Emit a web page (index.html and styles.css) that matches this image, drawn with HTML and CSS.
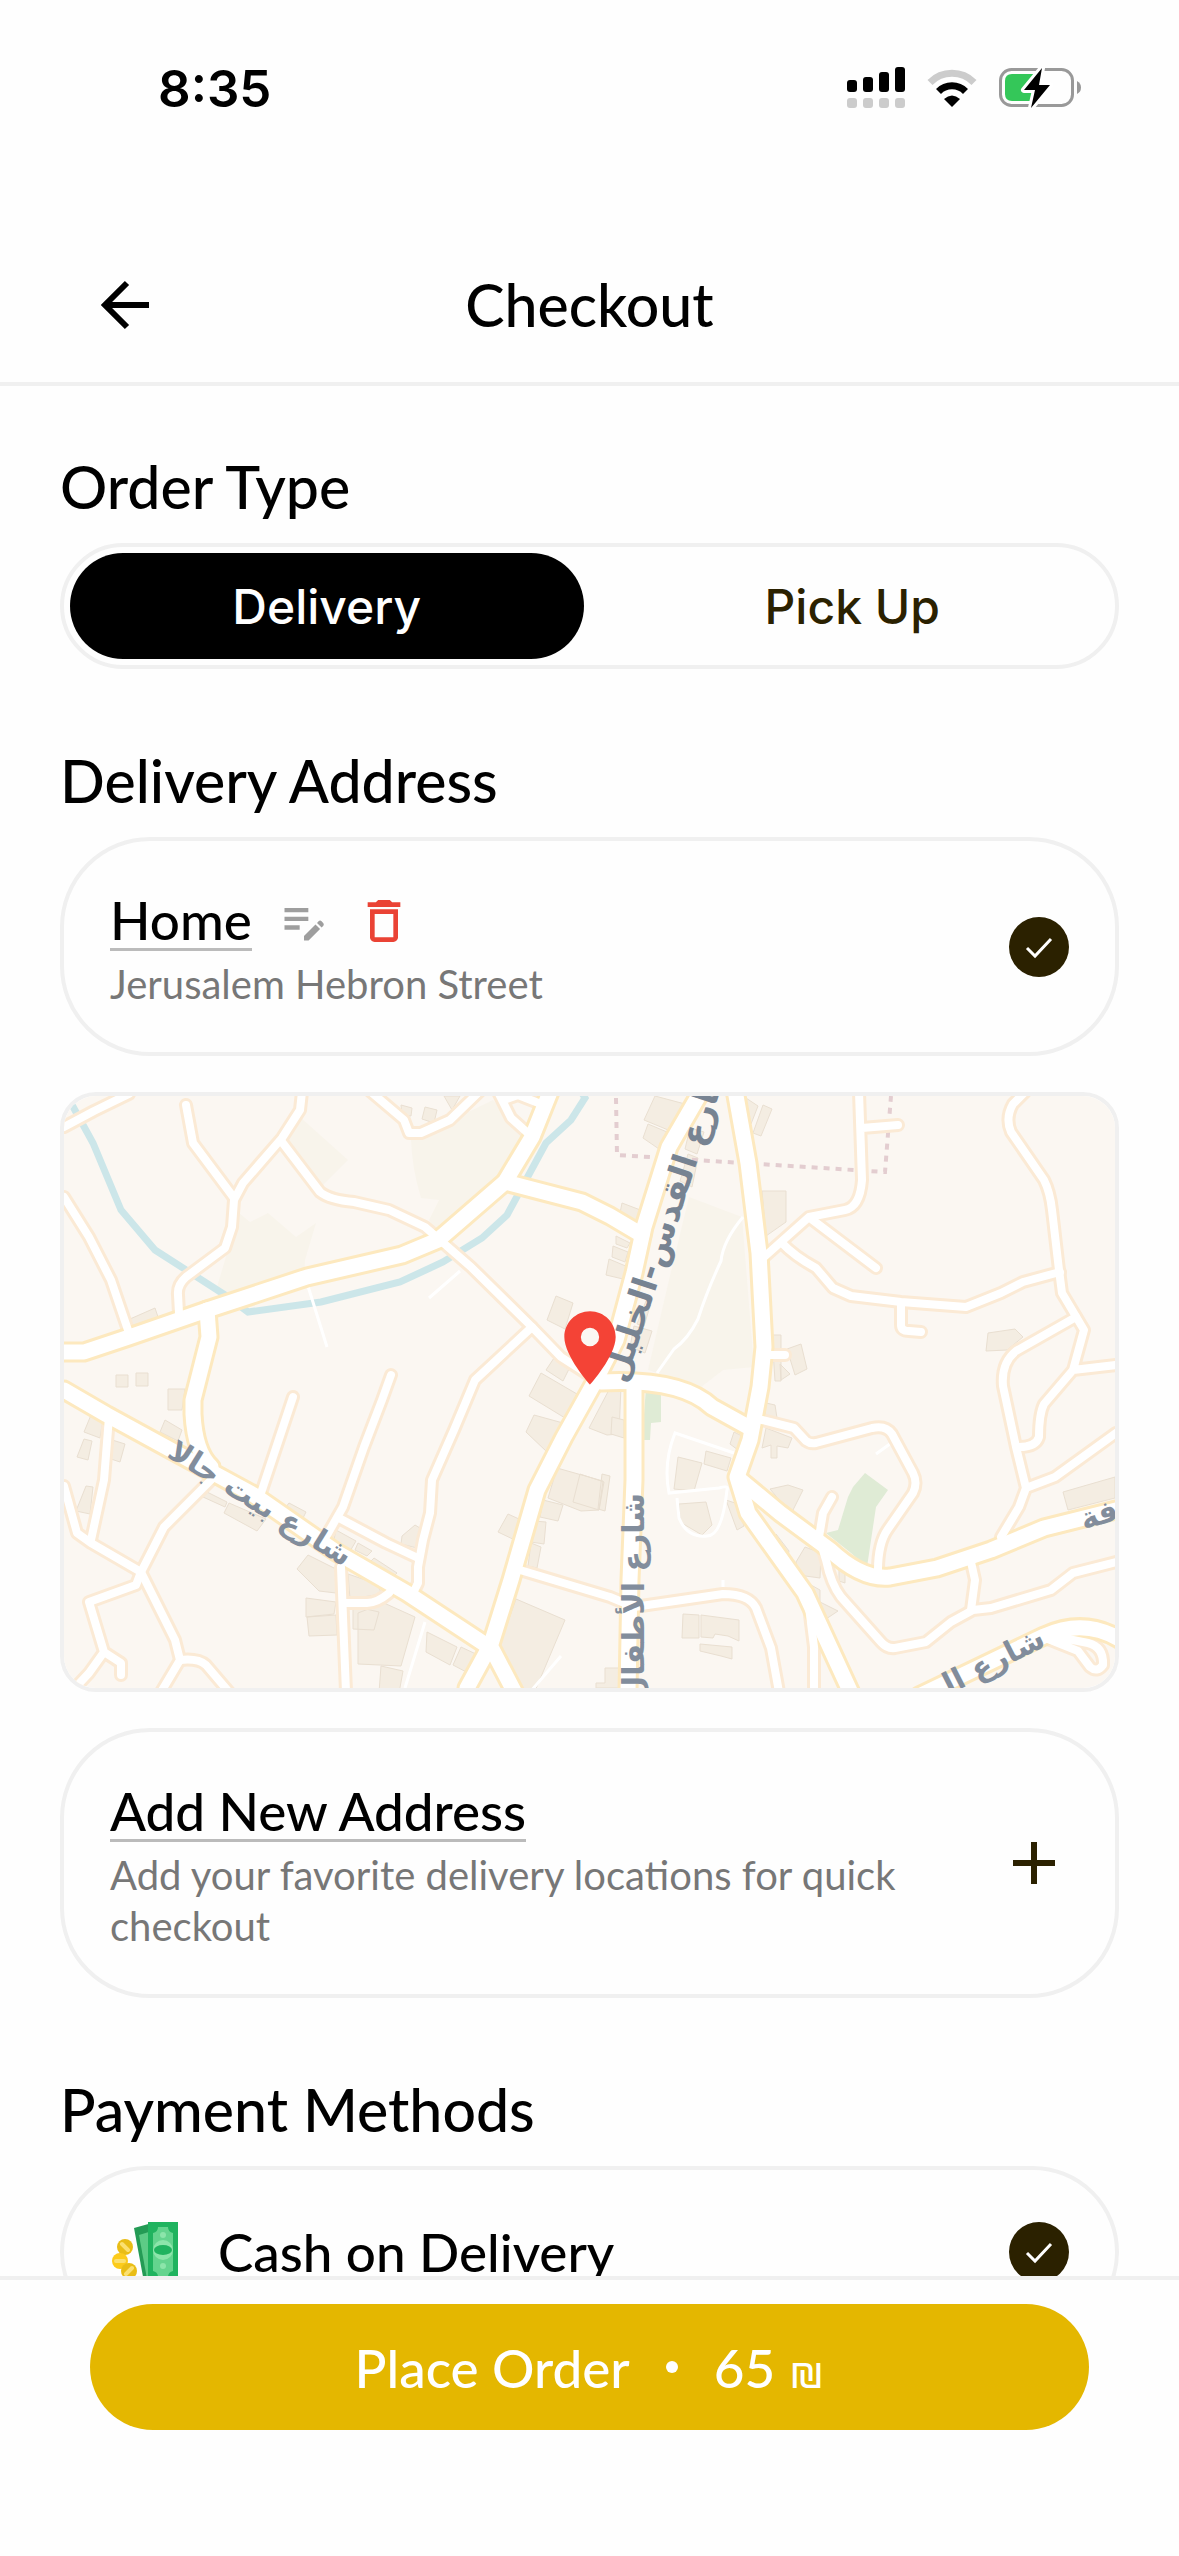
FILE: index.html
```
<!DOCTYPE html>
<html lang="en">
<head>
    <meta charset="UTF-8">
    <meta name="viewport" content="width=device-width, initial-scale=1.0">
    <title>Checkout</title>
    <link rel="stylesheet" href="styles.css">
</head>
<body>
    <div class="status-bar">
        <span class="time">8:35</span>
        <div class="status-icons">
            <svg width="58" height="42" viewBox="0 0 58 42">
                <g fill="#000">
                    <rect x="0" y="13" width="10" height="12" rx="3"/>
                    <rect x="16" y="10" width="10" height="15" rx="3"/>
                    <rect x="32" y="5" width="10" height="20" rx="3"/>
                    <rect x="48" y="0" width="10" height="25" rx="3"/>
                </g>
                <g fill="#ccc">
                    <rect x="0" y="31" width="10" height="10" rx="3"/>
                    <rect x="16" y="31" width="10" height="10" rx="3"/>
                    <rect x="32" y="31" width="10" height="10" rx="3"/>
                    <rect x="48" y="31" width="10" height="10" rx="3"/>
                </g>
            </svg>
            <svg width="50" height="38" viewBox="0 0 50 38">
                <path d="M3 13.500a31 31 0 0 1 44 0" fill="none" stroke="#ccc" stroke-width="7"/>
                <path d="M11.500 22.500a19 19 0 0 1 27 0" fill="none" stroke="#000" stroke-width="7"/>
                <path d="M25 38l-8-8q8-7 16 0z" fill="#000"/>
            </svg>
            <svg width="82" height="42" viewBox="0 0 82 42">
                <rect x="1.500" y="2.500" width="72" height="36" rx="11" fill="none" stroke="#999" stroke-width="3"/>
                <path d="M78 14v13q4-2 4-6.500t-4-6.500z" fill="#999"/>
                <path d="M13 7h28v27H13q-7 0-7-7V14q0-7 7-7z" fill="#34c759"/>
                <path d="M43 1L25 23h11l-4 18 19-23H40z" fill="#000" stroke="#fff" stroke-width="6" stroke-linejoin="round" paint-order="stroke"/>
            </svg>
        </div>
    </div>

    <header class="top-bar">
        <button class="icon-btn back-btn" aria-label="Back">
            <svg width="50" height="50" viewBox="0 0 50 50" fill="none" stroke="#000" stroke-width="6">
                <path d="M49 25H5M27 3L5 25l22 22"/>
            </svg>
        </button>
        <h1>Checkout</h1>
    </header>

    <main class="content">
        <section>
            <h2>Order Type</h2>
            <div class="order-type">
                <button class="type-btn active">Delivery</button>
                <button class="type-btn">Pick Up</button>
            </div>
        </section>

        <section>
            <h2>Delivery Address</h2>
            <div class="card">
                <div class="card-text">
                    <div class="card-title">
                        <a href="#" class="address-link">Home</a>
                        <button class="icon-btn" aria-label="Edit address">
                            <svg width="52" height="52" viewBox="0 0 24 24" fill="#9e9e9e">
                                <path d="M3 10h11v2H3v-2zm0-2h11V6H3v2zm0 8h7v-2H3v2zm15.010-3.130l.710-.710a.996.996 0 0 1 1.410 0l.710.710c.390.390.390 1.020 0 1.410l-.710.710-2.120-2.120zm-.710.710l-5.300 5.300V21h2.120l5.300-5.300-2.120-2.120z"/>
                            </svg>
                        </button>
                        <button class="icon-btn" aria-label="Delete address">
                            <svg width="56" height="56" viewBox="0 0 24 24" fill="#ea4335">
                                <path d="M6 19c0 1.100.900 2 2 2h8c1.100 0 2-.900 2-2V7H6v12zM8 9h8v10H8V9zm7.500-5l-1-1h-5l-1 1H5v2h14V4z"/>
                            </svg>
                        </button>
                    </div>
                    <p>Jerusalem Hebron Street</p>
                </div>
                <svg class="check" viewBox="0 0 60 60">
                    <circle cx="30" cy="30" r="30" fill="#2b2100"/>
                    <path d="M18 31l8 8 16-17" fill="none" stroke="#fff" stroke-width="3"/>
                </svg>
            </div>

            <div class="map">
                <svg class="map-art" viewBox="0 0 1051 592" preserveAspectRatio="xMidYMid slice">
                    <defs>
                        <g id="small-roads">
                            <path d="M0 31L30 15 65-2"/>
                            <path d="M122 9l7 38 41 55"/>
                            <path d="M238-4l-2 18-18 28-39 45-9 17-2 27-7 21-39 29q-9 8-8 18l1 18"/>
                            <path d="M218 46l38 50q10 8 34 10l35 8 36 17 46 40 61 60 29 30 25 16"/>
                            <path d="M307-4l33 28 5 13h12l29-13 29-28"/>
                            <path d="M434-4l13 26 19 17M440 4l14-5 23 9"/>
                            <path d="M0 101l25 40 22 43 18 53"/>
                            <path d="M327 279l-9 25-18 47-21 60-16 28"/>
                            <path d="M229 301l-32 96"/>
                            <path d="M468 231l-57 53-21 50-22 50-2 33-7 27-5 27v16l-7 14"/>
                            <path d="M275 422l47 25 32 15"/>
                            <path d="M45 321l-5 63-13 60"/>
                            <path d="M0 390l13 47 14 10 50 29 34 68 5 20-19 32"/>
                            <path d="M147 384l-47 47-23 45-5 13-47 17 15 50-15 21-14 15M40 556l17 11v12M116 564q18-2 26 5l23 27"/>
                            <path d="M277 471l5 125M281 507h22q10 0 22-10"/>
                            <path d="M456 474l90 27 24 10 89-13q26 0 33 14l15 40 8 44"/>
                            <path d="M698 324l32 8 12 13q4 3 10 2l56-15q14-3 20 6l21 39q5 10 0 20l-25 36q-10 14-10 41"/>
                            <path d="M768 401l-9 16-4 24 7 23q5 24 15 37l40 45q6 7 14 6l31-6 25-20 22-12 18-2 60-18 22-17 43-11"/>
                            <path d="M907 466l4 18-4 30M745 511l5 40v45"/>
                            <path d="M961-4l-12 12q-8 14-2 28l33 48q6 12 8 30l7 60 3 23 22 37-11 40-29 34q-5 10-5 33-3 10-20 10M1009 274l43-5"/>
                            <path d="M1012 221l-60 34q-15 12-13 35l13 61 10 41-7 19-18 30M962 392l29-11 61-44"/>
                            <path d="M996 176l-37 10-22 11-35 14-65-5-50-6-18-8-17-20q-22-12-34-25"/>
                            <path d="M700 161l45-40 36-7q15-3 17-30l-3-88M798 32l36-3M746 122l66 50M837 209v20q0 6 8 6l12 1M704 259h17"/>
                            <path d="M984 539l40 8q16 4 15 22-6 8-13 2l-12-16-30-12"/>
                        </g>
                        <g id="main-roads">
                            <path d="M0 256h20l45-15 78-27 100-33 95-22 36-15 67-58 27-45 20-50"/>
                            <path d="M441 86l77 20 28 14 32 19"/>
                            <path d="M638-6l-33 57-25 80-10 46-18 67-23 45-29 52-27 53-26 90-20 64-24 44M427 551l24 46"/>
                            <path d="M671-6l13 73 11 90 5 94-4 40-10 53-13 37 11 36 57 80 46 100"/>
                            <path d="M537 286q80-4 111 25l38 21"/>
                            <path d="M570 289v95l-4 100-2 112"/>
                            <path d="M675 383l41 34 50 37q32 30 60 27l47-9 54-18 53-22 72-18"/>
                            <path d="M0 294l43 25 64 35 83 45 82 57 71 41 82 54"/>
                            <path d="M143 214l2 27-16 63v14q2 38 18 53"/>
                            <path d="M855 600l125-60q40-18 75 3"/>
                        </g>
                    </defs>

                    <rect width="1051" height="592" fill="#fbf7f2"/>

                    <!-- open land -->
                    <g fill="#f8f4eb">
                        <path d="M625 101l53 20 12 150-31 3-22 17-53-17 21-90z"/>
                        <path d="M347 44l82-40 36 40-22 33-69 60-9-13 10-20-18-2q-9-30-10-58z"/>
                        <path d="M236 21l48 43-27 27-39-49z"/>
                        <path d="M175 117l11 9 18-9 28 24 20-14-11 37-1 17-72 20-15-10 8-27z"/>
                    </g>

                    <!-- parks -->
                    <g fill="#dfebd5">
                        <path d="M582 292h15v34l-10 1-1 17h-8z"/>
                        <path d="M801 377l23 17-12 17-9 60-16-14-25-20 12-3 10-33 5-10z"/>
                    </g>

                    <!-- buildings -->
                    <g fill="#f4ede2" stroke="#e9dfd1" stroke-width="1">
                        <path d="M337 9l11 3-1 8-9-1zM361 11l12 3-3 13-12-4zM380 0h16l-8 14z"/>
                        <path d="M591 0l30 8-12 28-29-12zM584 28l19 8-8 17-16-11zM626 32l14 4-7 22-12-5zM624 58l10 4-6 29-12-6zM558 107l21 8-7 13-17-6zM552 140l14 7-3 5-11-4zM549 150l15 6-3 10-13-5zM545 163l19 8-5 12-17-4zM582 205l4 5-6 20-7-2zM570 230l18 5-7 22-15-6z"/>
                        <path d="M682 2l12 8-7 18-8-10zM699 9l9 4-11 27-8-3zM698 95h24v31l-20 14z"/>
                        <path d="M708 239h9v46h-6zM723 253l14-5 6 25-12 6zM716 268l10 10-9 6zM924 237l27-4 8 8-16 13-21 1z"/>
                        <path d="M492 200l17 7-8 26-18-9zM490 262l16 9-7 14-17-11zM477 277l36 21-12 24-36-22zM66 223l25-11 3 9-29 10zM52 279h12v12H52zM72 277h12v13H72zM104 293h17l-3 21h-14z"/>
                        <path d="M470 319l29 8-16 29-21-20zM547 290l-22 42 18 7 12-1 2-48zM493 372l46 13-4 29-18 1-33-13zM538 378l8 2-5 35-7-2zM516 378l24 8-5 28-26-8zM479 404l20 5-5 16-18-4zM444 418l22 10-11 18-21-10zM470 425l12 1-2 22-13-2zM467 447l10 4-4 21-9-2z"/>
                        <path d="M452 503l49 21-30 71h-27l-10-41zM363 536l30 15-7 18-24-13zM397 551l17 8-6 20-19-10zM320 507l31 14-14 49-43-2v-51zM317 570l22 5-4 22h-20zM289 510l26 6-5 18-21-1zM242 502l30 4-2 12-28 3zM243 521l29-2 1 20-28 1zM244 459l28 14v24l-17-2-22-22zM284 478l29 10 5 10-32 5zM272 434l20 11-7 12-16-9zM338 440l13-11 5 3-3 20-16-4zM294 447l14 8-5 5-12-6zM310 462l23 15-5 5-25-13zM225 407l17 9-3 6-18-10zM165 407l37 16-9 12-33-18zM141 395l22 11-2 5-22-10zM101 324l17 10-4 11-18-9zM27 319l12 5-3 18-16-6zM20 343l8 2-4 19-11-3zM45 343l16 5-5 18-12-4zM22 390l7 1-3 27-14-3z"/>
                        <path d="M548 321l12 3v18l-13-4zM702 307l9 2 2 13-12-3zM670 336l8 4-4 14-8-6zM702 332l26 10-4 10-11-2v12h-6v-13l-9 3zM614 361l24 6-8 28-20-2zM642 355l25 7-4 13-23-7zM615 408l27-2 6 23-10 10-22-13zM662 404l12 4 6 22-7 4zM706 393l18-4 15 5-12 24zM712 438l13 17-2 9-13-16zM741 451l16 6-1 25-22-3-2-13zM747 489l9 5v12l18 9-15 10-16-23zM775 474l6 3v10l-6-2z"/>
                        <path d="M619 518l16 1v23h-17zM637 519l38 5v21l-11-5-13-2-2 4-12-1zM636 548l32 3v12l-11-3-21-5zM541 572h14v20h-23v-5h9zM999 396l52-15v21l-47 12z"/>
                    </g>

                    <path class="river" d="M7 7l22 40 28 67 34 40 70 45 23 17 73-10 79-20 43-20 39-24 25-23 39-72 25-23 14-22-5-8"/>
                    <path class="border-line" d="M552 2l1 57 268 17 6-76"/>

                    <g class="footpath">
                        <path d="M243 187l20 64M396 175l-31 27M679 121q-20 24-22 44-14 30-23 58-10 20-24 30l-17 24"/>
                        <path d="M670 357l-59-20q-12 30-6 60l50-5q10-3 8 2-5 46-20 46-20 2-28-18l-2-20M361 526l-20 66M497 560l-30 35M830 345l-18 13M659 484v14"/>
                    </g>

                    <use href="#small-roads" class="small-casing"/>
                    <use href="#main-roads" class="main-casing"/>
                    <use href="#small-roads" class="small-fill"/>
                    <use href="#main-roads" class="main-fill"/>

                    <g class="street-name">
                        <text class="major" transform="translate(561 288) rotate(-72)">شارع القدس-الخليل</text>
                        <text transform="translate(102 360) rotate(32)">شارع بيت جالا</text>
                        <text transform="translate(580 397) rotate(-90)" text-anchor="end">شارع الأطفال</text>
                        <text transform="translate(983 549) rotate(-27)" text-anchor="end">شارع ال</text>
                        <text transform="translate(1020 434) rotate(-18)">فة</text>
                    </g>
                </svg>
                <svg class="map-pin" viewBox="0 0 24 24" fill="#f44336">
                    <path d="M12 2C8.130 2 5 5.130 5 9c0 5.250 7 13 7 13s7-7.750 7-13c0-3.870-3.130-7-7-7zm0 9.500a2.500 2.500 0 0 1 0-5 2.500 2.500 0 0 1 0 5z"/>
                </svg>
            </div>

            <div class="card">
                <div class="card-text">
                    <div class="card-title">
                        <a href="#" class="address-link">Add New Address</a>
                    </div>
                    <p>Add your favorite delivery locations for quick checkout</p>
                </div>
                <button class="icon-btn add-btn" aria-label="Add address">
                    <svg width="42" height="42" viewBox="0 0 42 42" stroke="#2b2100" stroke-width="6">
                        <path d="M0 21h42M21 0v42"/>
                    </svg>
                </button>
            </div>
        </section>

        <section>
            <h2>Payment Methods</h2>
            <div class="card payment-card">
                <svg class="cash" width="66" height="60" viewBox="0 0 66 60">
                    <path d="M22 6l18-5v57l-8 2z" fill="#249b55"/>
                    <path d="M27 13l13-4v46l-5 2z" fill="#5dcb86"/>
                    <rect x="36" y="0" width="30" height="60" fill="#20b35f"/>
                    <path d="M46 5h10q0 5 5 6v38q-5 1-5 6H46q0-5-5-6V11q5-1 5-6z" fill="#64d48e"/>
                    <circle cx="51" cy="28" r="10" fill="#8ce5aa"/>
                    <ellipse cx="51" cy="28" rx="9" ry="5" fill="#20b35f"/>
                    <circle cx="51" cy="13" r="3" fill="#8ce5aa"/>
                    <circle cx="51" cy="44" r="3" fill="#8ce5aa"/>
                    <circle cx="13" cy="25" r="8" fill="#e9bd16"/>
                    <circle cx="8" cy="39" r="8" fill="#fccb1b"/>
                    <circle cx="17" cy="49" r="8" fill="#e9bd16"/>
                    <g stroke="#fbe070" stroke-width="4" stroke-linecap="round">
                        <path d="M10 22l6 6M4 39h8M14 52l6-6"/>
                    </g>
                </svg>
                <span class="method">Cash on Delivery</span>
                <svg class="check" viewBox="0 0 60 60">
                    <circle cx="30" cy="30" r="30" fill="#2b2100"/>
                    <path d="M18 31l8 8 16-17" fill="none" stroke="#fff" stroke-width="3"/>
                </svg>
            </div>
        </section>
    </main>

    <footer class="bottom-bar">
        <button class="place-order">
            <span>Place Order</span>
            <span class="dot"></span>
            <span>65 <small>₪</small></span>
        </button>
    </footer>
</body>
</html>
```
FILE: styles.css
```
* {
    margin: 0;
    padding: 0;
    box-sizing: border-box;
}

body {
    height: 100vh;
    display: flex;
    flex-direction: column;
    background: #fefefe;
    color: #000;
    font-family: Lato, "Liberation Sans", sans-serif;
    font-weight: 500;
}

svg {
    display: block;
}

button {
    font: inherit;
    border: none;
    background: none;
    cursor: pointer;
}

/* status bar */
.status-bar {
    display: flex;
    align-items: center;
    justify-content: space-between;
    height: 176px;
    padding: 0 98px 0 158px;
    flex-shrink: 0;
}

.time {
    font-family: Inter, sans-serif;
    font-size: 51px;
    font-weight: 600;
}

.status-icons {
    display: flex;
    align-items: center;
    gap: 22px;
}

/* header */
.top-bar {
    position: relative;
    display: flex;
    align-items: center;
    justify-content: center;
    height: 210px;
    padding-top: 52px;
    border-bottom: 4px solid #f0f0f0;
    flex-shrink: 0;
}

.back-btn {
    position: absolute;
    left: 100px;
}

h1,
h2 {
    font-size: 59px;
    font-weight: 500;
    line-height: 72px;
}

/* content */
.content {
    flex: 1;
    min-height: 0;
    overflow: hidden;
    padding: 65px 60px 0;
}

section {
    margin-bottom: 76px;
}

h2 {
    margin-bottom: 20px;
}

.order-type {
    display: flex;
    gap: 12px;
    padding: 6px;
    height: 126px;
    border: 4px solid #f0f0f0;
    border-radius: 63px;
}

.type-btn {
    flex: 1;
    border-radius: 53px;
    color: #2b2100;
    font-family: Inter, sans-serif;
    font-size: 48px;
    font-weight: 500;
}

.type-btn.active {
    background: #000;
    color: #fff;
}

.card {
    display: flex;
    align-items: center;
    padding: 46px;
    border: 4px solid #f0f0f0;
    border-radius: 90px;
}

.card-text {
    flex: 1;
}

.card-title {
    display: flex;
    align-items: center;
    gap: 26px;
    height: 68px;
}

.address-link {
    color: #000;
    font-size: 53px;
    line-height: 56px;
    text-decoration: none;
    border-bottom: 3px solid #bbb;
}

.card-text p {
    padding-top: 4px;
    margin-bottom: -4px;
    color: #777;
    font-size: 40px;
    font-weight: 400;
    line-height: 51px;
}

.check {
    width: 60px;
    height: 60px;
}

.add-btn {
    margin: 0 14px 0 60px;
}

/* map */
.map {
    position: relative;
    height: 600px;
    margin: 36px 0;
    border: 4px solid #f0f0f0;
    border-radius: 36px;
    overflow: hidden;
}

.map-art {
    width: 100%;
    height: 100%;
    fill: none;
}

.map-pin {
    position: absolute;
    top: 208px;
    left: calc(50% - 44px);
    width: 88px;
    height: 88px;
}

.river {
    stroke: #cce6e9;
    stroke-width: 7;
}

.border-line {
    stroke: #e3cdd0;
    stroke-width: 4;
    stroke-dasharray: 6 6;
}

.footpath {
    stroke: #fff;
    stroke-width: 3;
}

.small-casing,
.small-fill,
.main-casing,
.main-fill {
    stroke-linecap: round;
    stroke-linejoin: round;
}

.small-casing {
    stroke: #fbead5;
    stroke-width: 14;
}

.small-fill {
    stroke: #fff;
    stroke-width: 8;
}

.main-casing {
    stroke: #fde9bf;
    stroke-width: 21;
}

.main-fill {
    stroke: #fff;
    stroke-width: 15;
}

.street-name text {
    fill: #828d9c;
    font-family: "DejaVu Sans", sans-serif;
    font-size: 30px;
    font-weight: 700;
}

.street-name .major {
    fill: #778392;
    font-size: 34px;
}

/* payment */
.payment-card {
    padding: 52px 46px;
}

.cash {
    margin: 0 40px 0 2px;
}

.method {
    flex: 1;
    font-size: 53px;
    line-height: 60px;
}

/* bottom bar */
.bottom-bar {
    height: 280px;
    padding: 24px 90px 0;
    background: #fefefe;
    border-top: 4px solid #f0f0f0;
    flex-shrink: 0;
}

.place-order {
    display: flex;
    align-items: center;
    justify-content: center;
    gap: 36px;
    width: 100%;
    height: 126px;
    border-radius: 63px;
    background: #e4b700;
    color: #fff;
    font-size: 53px;
}

.place-order small {
    font-size: 42px;
}

.dot {
    width: 12px;
    height: 12px;
    border-radius: 50%;
    background: #fff;
}
```
